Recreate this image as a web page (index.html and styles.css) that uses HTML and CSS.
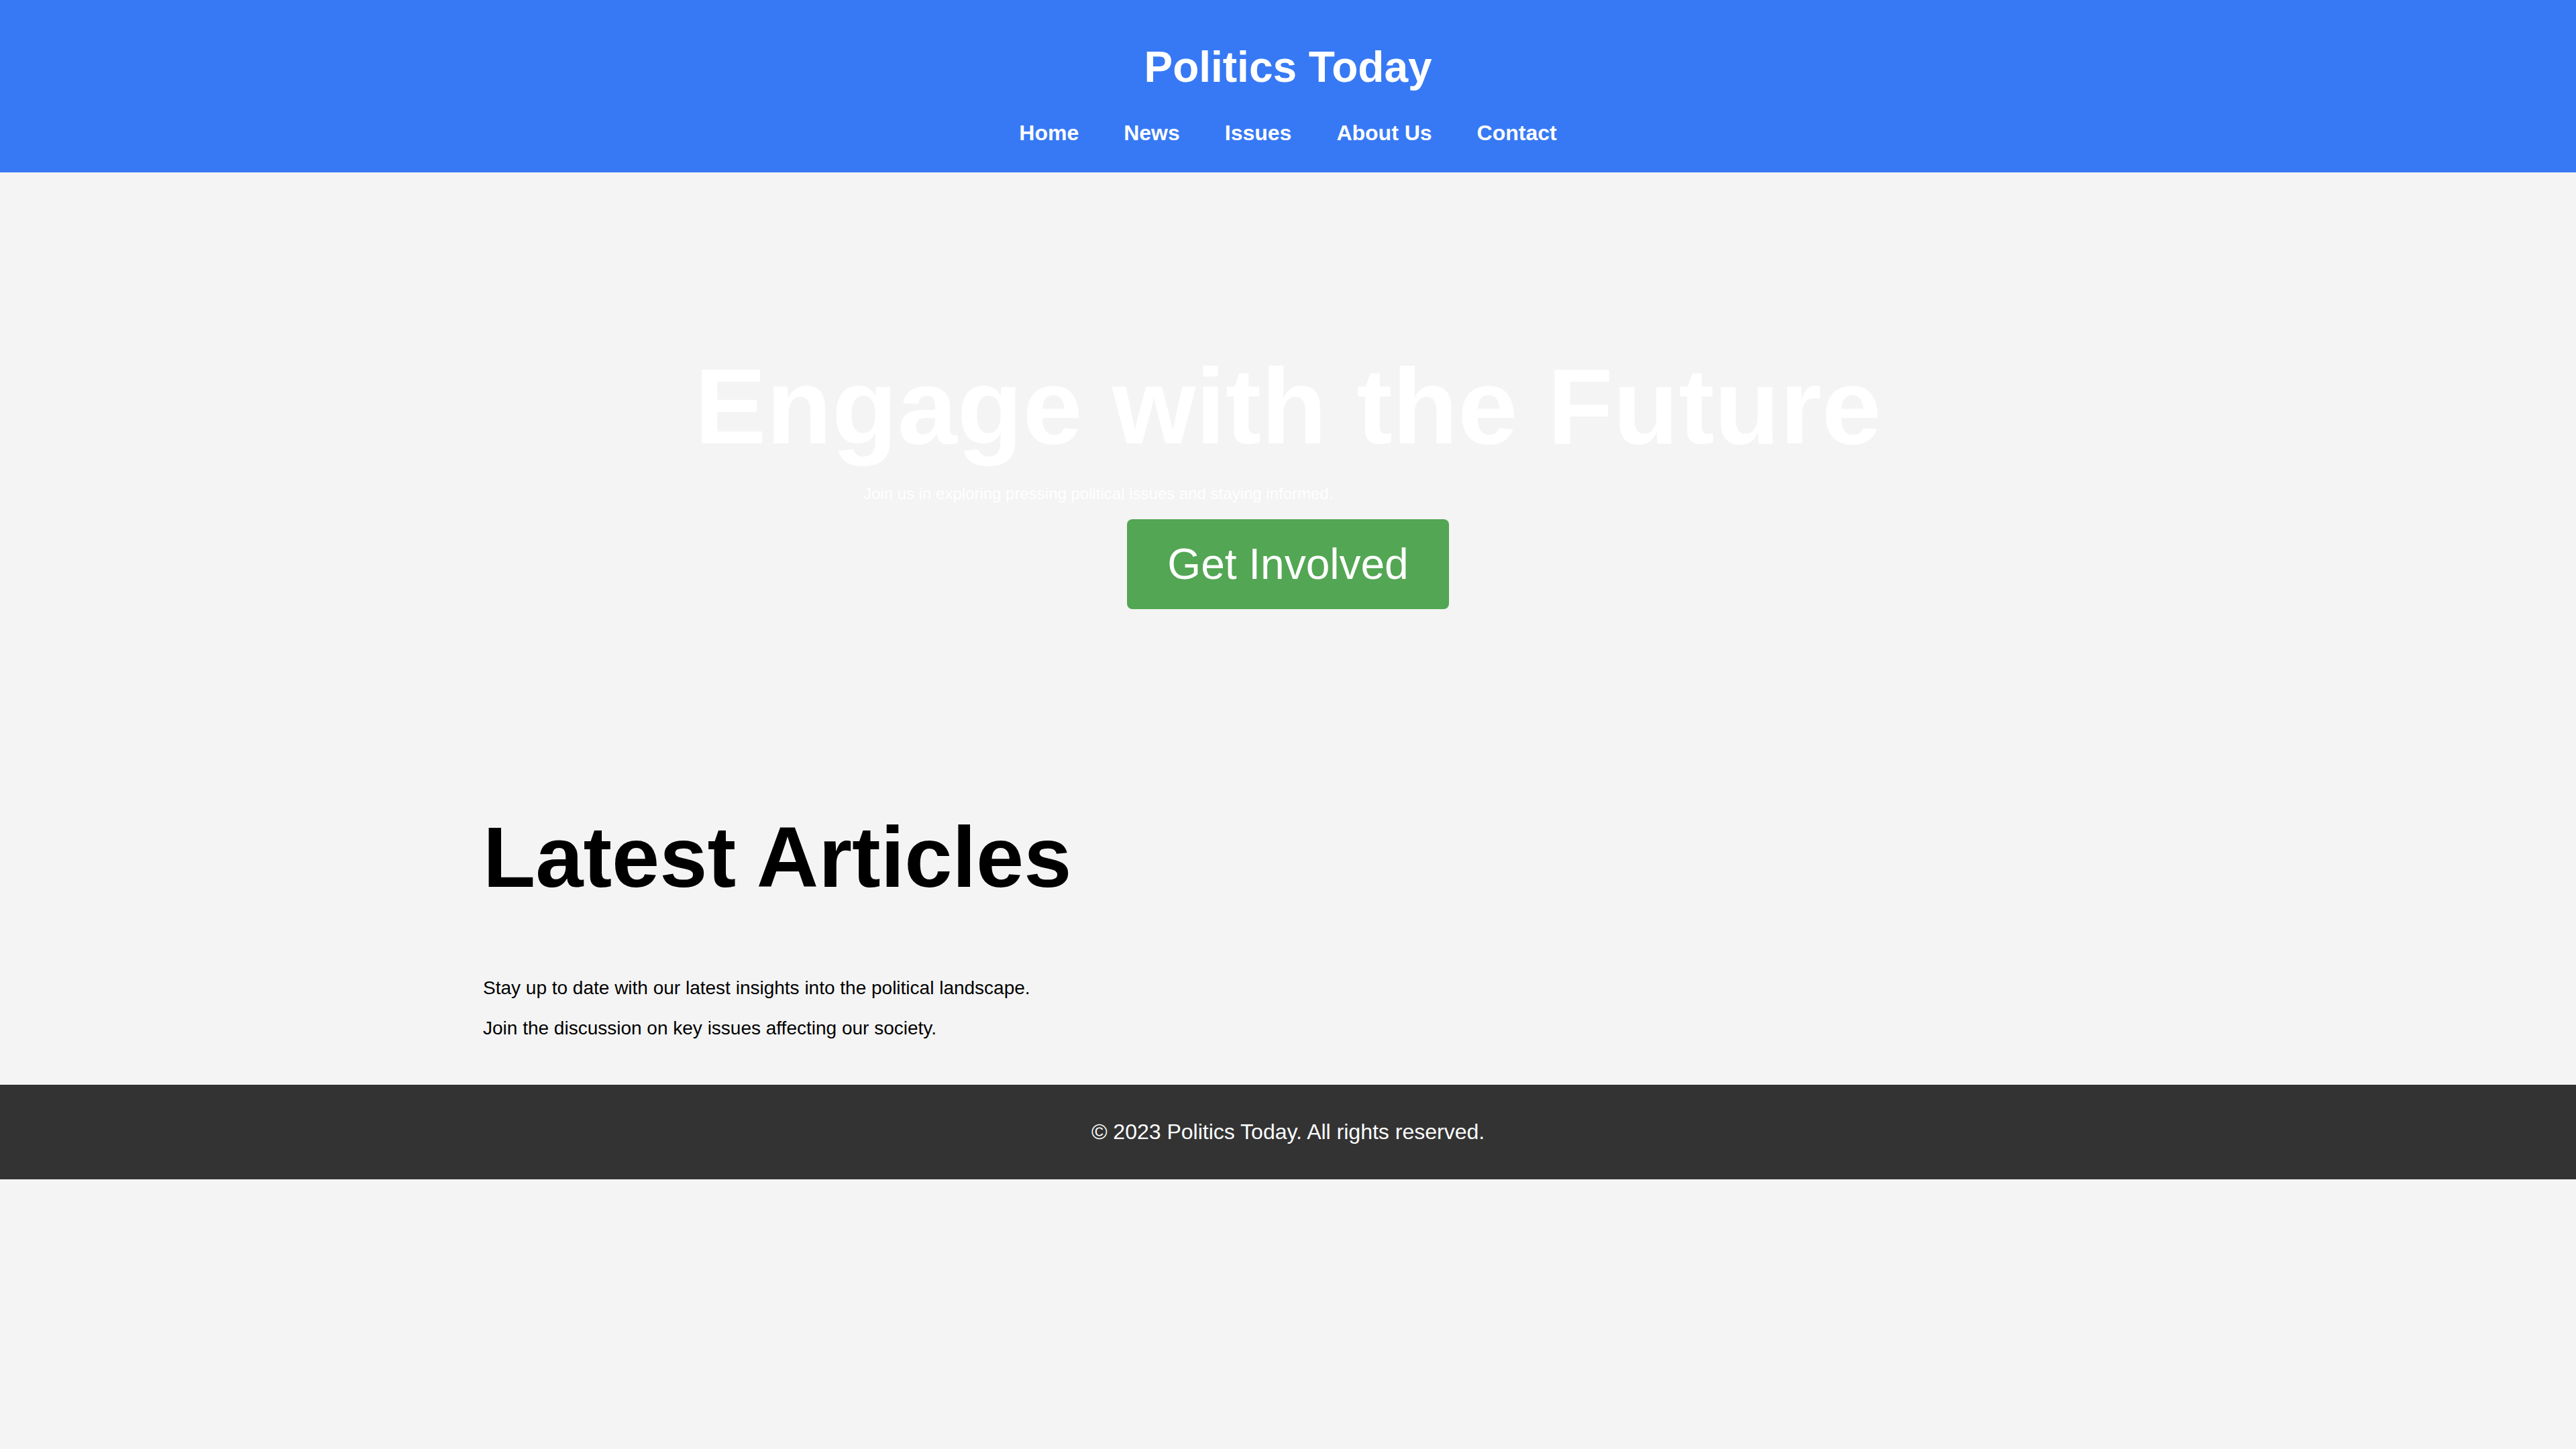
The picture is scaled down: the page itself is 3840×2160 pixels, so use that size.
FILE: index.html
```html
<!DOCTYPE html>
<html lang="en">
<head>
<meta charset="utf-8">
<title>Politics Today</title>
<link rel="stylesheet" href="styles.css">
</head>
<body>
<header class="site-header">
  <h1 class="site-title">Politics Today</h1>
  <nav class="site-nav">
    <a href="#">Home</a>
    <a href="#">News</a>
    <a href="#">Issues</a>
    <a href="#">About Us</a>
    <a href="#">Contact</a>
  </nav>
</header>
<section class="hero">
  <h1 class="hero-title">Engage with the Future</h1>
  <p class="hero-sub">Join us in exploring pressing political issues and staying informed.</p>
  <button class="hero-btn">Get Involved</button>
</section>
<section class="articles">
  <h2 class="articles-title">Latest Articles</h2>
  <p class="articles-text">Stay up to date with our latest insights into the political landscape.</p>
  <p class="articles-text">Join the discussion on key issues affecting our society.</p>
</section>
<footer class="site-footer">
  <p class="footer-text">© 2023 Politics Today. All rights reserved.</p>
</footer>
</body>
</html>
```
FILE: styles.css
```css
html, body {
  margin: 0;
  padding: 0;
  background: #f4f4f4;
  font-family: "Liberation Sans", Arial, Helvetica, sans-serif;
  color: #000;
}

.site-header {
  background: #3779f5;
  color: #fff;
  text-align: center;
  padding: 40px 0 40px;
}

.site-title {
  font-size: 64px;
  font-weight: bold;
  margin: 23px 0 43px;
  line-height: normal;
}

.site-nav {
  display: flex;
  justify-content: center;
  gap: 67px;
}

.site-nav a {
  color: #fff;
  text-decoration: none;
  font-weight: bold;
  font-size: 32px;
  line-height: normal;
}

.hero {
  display: flex;
  flex-direction: column;
  align-items: center;
  text-align: center;
  padding: 150px 0;
}

.hero-title {
  font-size: 160px;
  font-weight: bold;
  color: #fff;
  margin: 107px 0 0;
  line-height: normal;
}

.hero-sub {
  width: 1266px;
  text-align: left;
  font-size: 24px;
  color: #fff;
  margin: 24px 0;
  line-height: normal;
}

.hero-btn {
  font-family: "Liberation Sans", Arial, Helvetica, sans-serif;
  font-size: 64px;
  line-height: normal;
  color: #fff;
  background: #53a653;
  border: none;
  border-radius: 8px;
  padding: 30px 60px;
  cursor: pointer;
}

.articles {
  max-width: 2400px;
  margin: 0 auto;
  padding: 40px 0;
}

.articles-title {
  font-size: 128px;
  font-weight: bold;
  margin: 106px 0;
  line-height: normal;
}

.articles-text {
  font-size: 28px;
  margin: 28px 0;
  line-height: normal;
}

.site-footer {
  background: #333;
  color: #fff;
  text-align: center;
  padding: 20px;
}

.footer-text {
  font-size: 32px;
  margin: 32px 0;
  line-height: normal;
}
```
